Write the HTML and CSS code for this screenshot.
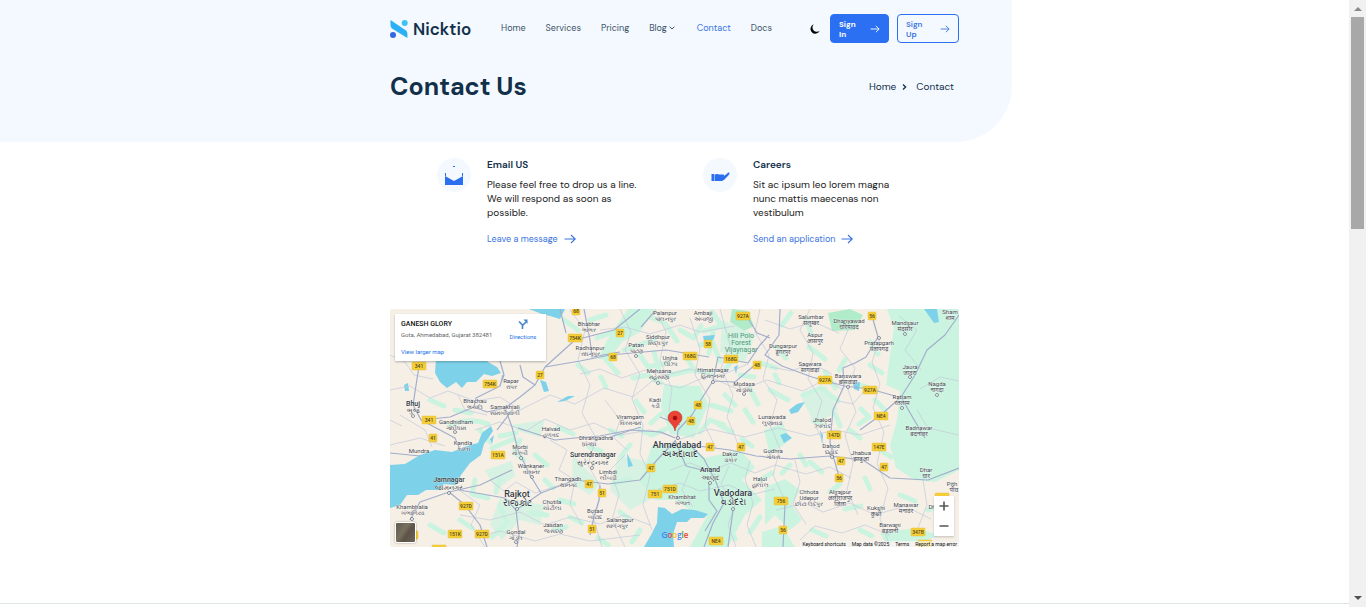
FILE: index.html
```html
<!DOCTYPE html>
<html lang="en">
<head>
<meta charset="utf-8">
<title>Contact Us - Nicktio</title>
<link rel="stylesheet" href="styles.css">
</head>
<body>
<svg class="defs" aria-hidden="true">
  <symbol id="arrow" viewBox="0 0 12 10"><path d="M0.5 5H11M7 1l4.2 4L7 9" fill="none" stroke="currentColor" stroke-width="1.1"/></symbol>
</svg>
<header class="hero">
  <div class="wrap">
    <nav class="nav">
      <a class="brand" href="#">
        <svg class="logo" viewBox="0 0 18 18"><path d="M.5 0 16 10.600Q18 12 17.300 18L2 8.500Q0 7 .5 0Z" fill="#2cb0f5"/><circle cx="14.700" cy="3" r="3" fill="#3fc3ee"/><circle cx="3" cy="15" r="3" fill="#3468df"/></svg>
        <span>Nicktio</span>
      </a>
      <ul class="menu">
        <li><a href="#">Home</a></li>
        <li><a href="#">Services</a></li>
        <li><a href="#">Pricing</a></li>
        <li><a href="#">Blog<svg class="chev" viewBox="0 0 6 4"><path d="M.6.7 3 3 5.400.7" fill="none" stroke="currentColor" stroke-width="1"/></svg></a></li>
        <li><a class="active" href="#">Contact</a></li>
        <li><a href="#">Docs</a></li>
      </ul>
      <div class="actions">
        <button class="theme" aria-label="Dark mode"><svg viewBox="0 0 10 10"><path d="M3.800.3A4.800 4.800 0 1 0 9.800 6.600 4 4 0 0 1 3.800.3Z"/></svg></button>
        <a class="btn solid" href="#"><span>Sign<br>In</span><svg><use href="#arrow"/></svg></a>
        <a class="btn outline" href="#"><span>Sign<br>Up</span><svg><use href="#arrow"/></svg></a>
      </div>
    </nav>
    <div class="title-row">
      <h1>Contact Us</h1>
      <div class="crumbs"><a href="#">Home</a><svg viewBox="0 0 5 6"><path d="M1 .6 3.600 3 1 5.400" fill="none" stroke="currentColor" stroke-width="1.300"/></svg><span>Contact</span></div>
    </div>
  </div>
</header>
<main class="wrap">
  <section class="features">
    <article class="feature">
      <div class="badge"><svg viewBox="0 0 34 34"><path d="M8 18 17 23 26 18V27H8Z" fill="#2a6ff0"/><path d="M8.500 18v-3M25.500 18v-3M16 8.500h2" stroke="#2a6ff0"/></svg></div>
      <div class="copy"><h2>Email US</h2><p>Please feel free to drop us a line. We will respond as soon as possible.</p><a class="more" href="#">Leave a message<svg><use href="#arrow"/></svg></a></div>
    </article>
    <article class="feature">
      <div class="badge"><svg viewBox="0 0 34 34"><path d="M8.500 16h2.500V23H8.500ZM11.500 16.500q3-.8 5 0h4q1.500 1 0 1.800l3.500-2.600q1-1.500 2.500-1 .5.800-1 2.500L21.500 21.500 19 23H11.500Z" fill="#2a6ff0"/></svg></div>
      <div class="copy"><h2>Careers</h2><p>Sit ac ipsum leo lorem magna nunc mattis maecenas non vestibulum</p><a class="more" href="#">Send an application<svg><use href="#arrow"/></svg></a></div>
    </article>
  </section>
  <section class="map" aria-label="Map">
    <svg class="canvas" viewBox="390 309 569 238" preserveAspectRatio="xMidYMid slice">
      <defs><rect id="s2" x="-4" y="-4" width="8" height="8" rx="1"/><rect id="s4" x="-7" y="-4" width="14" height="8" rx="1"/><circle id="dot" r="1.500"/></defs>
      <rect x="390" y="309" width="569" height="238" fill="#f5efe6"/>
      <g class="veg">
        <path d="M887 309 894 328 890 355 886 385 900 391 897 420 890 445 896 468 915 480 935 482 959 470V309Z"/>
        <path class="deep" d="M732 309 748 311 754 326 744 331 730 322ZM828 313 850 309 863 315 855 330 832 331Z"/>
        <path d="M652 445 690 444 705 458 740 450 755 467 742 480 762 500 745 515 728 547H690L708 514 690 510 675 500 655 500 640 482Z"/>
        <path d="M628 309 655 309 640 332 622 342 609 360 598 359 607 340ZM664 385 700 386 708 405 694 438 670 434 661 407Z"/>
        <path d="M765 487 785 479 800 490 792 505 802 520 790 530 775 515 765 525ZM764 430 783 423 790 440 770 455ZM880 533 915 528 940 535 925 541 885 542ZM762 532 782 526 795 547H762Z"/>
        <path d="M474 355 492 365 480 374ZM510 425 545 420 540 437 518 431ZM485 470 512 461 515 476 496 490ZM500 498 545 505 540 525 520 520 502 540 490 525ZM573 455 600 484 590 495 572 484ZM618 455 648 462 655 497 630 510 610 490ZM722 320 755 335 745 362 720 352ZM800 394 826 386 838 410 815 426Z" opacity=".7"/>
      </g>
      <g class="scrub">
        <path d="M450 425q20-8 38-1M500 436l16-3M492 448l22-9M475 480l-3 14 16 4M500 505l7 18-15 14M530 513l17 2M545 480l8 8M558 427l15 7M597 338l16-6M606 360l12 13M624 350l30-10M633 378l14-3 14 8M654 352l5 18M680 330l14 8 7-12M688 360l7 11 16 2M713 333l-4 20M726 338l12 8M738 353l-13 17M761 363l15 5M770 390l18 10M809 347l16 12M825 372l10 16M803 395l18-7 17 13M813 421l12 5M835 414l5 12M750 389l8 15M711 405l20 6M718 424l14 8M601 377l5 10M636 401l8 11M661 414l-10 9M589 447l12 4M613 484l16-5M620 512l8 6M570 517l12 6M598 538l10 7M554 530l12-3M727 519l8 20M750 532l10-15M760 480l12-7M776 347l10 11M782 325l9-12M806 318l5 16M870 342l8 12M860 385l12 4M861 409l8 8-10 7M810 462l12 10M830 492l10-8M845 509l16-3M865 478l5 11M900 495l15 6M928 510l14-5M880 450l11 7M742 439l10 7"/>
        <path d="M645 315l20 8 12 18M640 355l8 12 20-4M670 375l22-5M700 345l12-4 8 20M712 312l10 14-18 5M640 430l12 5 14-6M700 432l10-12 14 5M725 395l10 10M745 410l8 12M740 375l14 2M775 375l4 8M590 320l16-5M578 365l10 8M564 320l14 10M430 400l14 6M455 410l16 3M480 430l10 12M520 440l-6 12 10 8M535 455l12 10M500 480l-4 12M460 520l12 8M430 525l14 8M560 500l14 4M610 430l12 6M630 445l-8 10M640 530l-8 12M800 455l6 10M850 430l10 8M845 360l-6 10M875 400l10 10M870 365l12 8M860 530l12 6M812 530l14 6M790 465l-8 8"/>
      </g>
      <g class="water">
        <path d="M436 359 435 373 440 382 447 388 456 382 462 388 467 382 476 382 484 374 492 376 501 373 497 367 488 362 485 358ZM529 309h36l-5 10-10-3-8-2Z"/>
        <path d="M390 465 405 464 420 455 435 450 452 452 467 446 478 443 482 433 491 426 493 431 484 444 481 455 470 463 461 475 456 485 444 484 439 490 426 490 418 495 407 495 400 505 390 508Z"/>
        <path d="M658 507 665 508 672 514 682 509 695 510 708 514 704 518 691 518 687 522 677 522 673 534 674 547H644L651 535 657 523Z"/>
        <path d="M540 380 546 382 549 391 544 392ZM404 385 408 383 409 391 405 391ZM557 402 568 396 575 396 565 401ZM703 336 715 335 713 340 704 341ZM734 367 738 365 736 374ZM853 383 860 382 859 391 854 389ZM789 410 797 404 805 402 798 412 791 414ZM924 309h13l2 13-5 1-5-7ZM627 453 633 466 628 467ZM780 435 786 433 792 438 784 443ZM820 430 823 435 822 444ZM490 439l4-4-2 9Z"/>
      </g>
      <g class="paths">
        <path d="M390 390 410 386 430 398 448 391 475 401 500 397 520 410 550 395 575 404 604 388 633 397 652 381 680 388 707 376 740 390 767 380 803 391 826 379 843 390M390 445 420 438 445 446M475 430 500 422 526 431 545 419 570 430 594 423 620 435 650 430 681 439 710 429 745 437 778 428 810 436 835 430 860 435 890 425M400 415 425 430 432 447M570 310 585 330 578 360 590 385 582 413 596 438 588 465 602 490 594 520 602 547M620 309 631 332 625 350 640 374 632 399 643 425 640 454 650 475 643 505 652 530M655 309 666 332 660 360 672 389 669 410 680 430M690 318 700 349 695 375 710 399 705 426 716 448M720 309 730 345 721 368 733 395 727 417 738 444M760 309 755 332 769 355 763 379 777 400 770 425 780 449 773 475 785 500M810 309 800 330 813 353 808 379 822 401 815 424 825 447M850 325 840 349 855 368 848 390 856 412 845 435 853 463 847 490 858 515M880 337 872 362 880 384 873 408 884 432 877 464 888 488 880 519 890 547"/>
        <path d="M459 490 480 505 471 525 485 547M490 480 504 491 516 482 535 493 560 485M460 515 490 520 520 512 545 525 570 517 600 524 624 515 650 525M475 538 500 531 535 541 560 534 590 541 640 535M550 440 567 450 559 470 575 480 570 505 582 525M625 455 610 470 619 495 612 520 625 547M670 470 690 463 709 471 731 463 755 473 775 465 806 474 830 467 851 478M658 489 680 483 700 491 729 485 750 495 775 489M690 470 682 490 693 507M729 466 721 484 735 505 728 525 736 547M750 460 745 479 753 503 747 525 756 547M776 510 805 503 823 512 850 503 875 515 905 506 931 519M800 540 815 526 842 533 865 525 890 535M795 460 800 482 793 504 806 524M600 330 625 327 650 334 680 325 700 332 735 326M580 374 600 369 622 378 645 370 666 375 690 369 717 377 748 364M765 320 790 329 814 322 839 333M770 367 792 371 811 363 832 374M865 390 853 404 838 401M899 316 917 330 905 350 921 370M920 389 940 377 959 381M917 410 928 428 959 435M923 480 927 505 918 528M390 420 402 426M390 355 405 362 414 375 433 379M458 395 465 410 487 415M605 400 620 420 614 438 627 450"/>
      </g>
      <g class="roads">
        <path d="M419 366 413 405 421 420 450 417 474 407 487 412 505 408 520 397 535 385 545 367 575 340 614 330 640 309M421 420 440 430 455 438 460 450M474 407 476 398 500 386 503 375M545 367 580 361 610 355 666 350 709 357M500 361 504 375 500 385M520 365 523 377 535 385M505 408 512 427 518 450 530 475 541 493 516 510 519 535 517 547M390 453 420 456M513 409 497 430M512 470 480 485 449 492 420 502 410 520M449 492 465 505 480 525 487 547M516 510 505 498 459 490M541 493 575 480 608 484 640 480 657 460 675 441M518 428 555 440 575 438 600 436 630 430 661 432 675 438"/>
        <path d="M584 309 590 340 592 357 620 352M560 309 566 333M655 311 641 327M713 381 702 398 692 415 678 430 677 440M713 381 718 357 748 363 760 345 769 335M748 318 757 333 770 338M713 381 735 382 756 364M690 445 730 450 756 456 790 459 830 456 863 460 890 478 928 480 959 468M690 445 704 459 716 482 724 503 713 523 704 547M733 510 728 547M709 482 709 500 717 511 705 531M780 309 779 335 765 355 782 366 812 377 844 386 870 389 895 396M844 386 843 368 855 363 866 357 878 337 872 316M844 386 833 410 830 442 834 459 840 480M959 315 945 335 927 350 915 375 901 397 882 414 860 430M901 397 913 418 925 438M785 504 783 547M660 417 680 425M675 440 686 466 706 471M641 427 610 437M600 485 599 500 594 517 590 535"/>
      </g>
      <g class="dots"><use href="#dot" x="413" y="416"/><use href="#dot" x="449" y="493"/><use href="#dot" x="517" y="509"/><use href="#dot" x="678" y="438"/><use href="#dot" x="710" y="483"/><use href="#dot" x="733" y="509"/><use href="#dot" x="713" y="382"/><use href="#dot" x="592" y="468"/><use href="#dot" x="744" y="394"/><use href="#dot" x="658" y="383"/><use href="#dot" x="636" y="356"/><use href="#dot" x="879" y="338"/><use href="#dot" x="848" y="387"/><use href="#dot" x="902" y="408"/><use href="#dot" x="910" y="377"/><use href="#dot" x="937" y="395"/><use href="#dot" x="455" y="432"/><use href="#dot" x="521" y="458"/><use href="#dot" x="516" y="542"/><use href="#dot" x="532" y="477"/><use href="#dot" x="832" y="457"/><use href="#dot" x="412" y="519"/><use href="#dot" x="905" y="334"/></g>
      <g class="shield"><use href="#s2" x="576" y="311"/><use href="#s2" x="620" y="333"/><use href="#s2" x="613" y="357"/><use href="#s2" x="708" y="344"/><use href="#s2" x="757" y="365"/><use href="#s2" x="698" y="405"/><use href="#s2" x="691" y="421"/><use href="#s2" x="872" y="316"/><use href="#s2" x="540" y="375"/><use href="#s2" x="433" y="438"/><use href="#s2" x="710" y="447"/><use href="#s2" x="741" y="447"/><use href="#s2" x="651" y="468"/><use href="#s2" x="589" y="484"/><use href="#s2" x="602" y="493"/><use href="#s2" x="592" y="529"/><use href="#s2" x="841" y="461"/><use href="#s2" x="884" y="467"/><use href="#s2" x="839" y="478"/><use href="#s2" x="783" y="530"/><use href="#s4" x="419" y="366"/><use href="#s4" x="490" y="384"/><use href="#s4" x="575" y="338"/><use href="#s4" x="690" y="356"/><use href="#s4" x="731" y="359"/><use href="#s4" x="743" y="316"/><use href="#s4" x="825" y="380"/><use href="#s4" x="870" y="390"/><use href="#s4" x="881" y="416"/><use href="#s4" x="834" y="435"/><use href="#s4" x="879" y="447"/><use href="#s4" x="429" y="420"/><use href="#s4" x="498" y="455"/><use href="#s4" x="466" y="506"/><use href="#s4" x="455" y="534"/><use href="#s4" x="482" y="534"/><use href="#s4" x="411" y="535"/><use href="#s4" x="655" y="494"/><use href="#s4" x="670" y="489"/><use href="#s4" x="716" y="541"/><use href="#s4" x="781" y="501"/><use href="#s4" x="918" y="532"/><use href="#s4" x="942" y="497"/><use href="#s4" x="925" y="544"/><use href="#s4" x="439" y="549"/></g>
      <g class="num"><text x="576" y="313">68</text><text x="620" y="335">27</text><text x="613" y="359">68</text><text x="708" y="346">58</text><text x="757" y="367">48</text><text x="698" y="407">48</text><text x="691" y="423">48</text><text x="872" y="318">56</text><text x="540" y="377">27</text><text x="433" y="440">41</text><text x="710" y="449">47</text><text x="741" y="449">47</text><text x="651" y="470">47</text><text x="589" y="486">47</text><text x="602" y="495">51</text><text x="592" y="531">51</text><text x="841" y="463">47</text><text x="884" y="469">47</text><text x="839" y="480">56</text><text x="783" y="532">56</text><text x="419" y="368">341</text><text x="490" y="386">754K</text><text x="575" y="340">754K</text><text x="690" y="358">168G</text><text x="731" y="361">168G</text><text x="743" y="318">927A</text><text x="825" y="382">927A</text><text x="870" y="392">927A</text><text x="881" y="418">NE4</text><text x="834" y="437">147D</text><text x="879" y="449">147E</text><text x="429" y="422">341</text><text x="498" y="457">151A</text><text x="466" y="508">927D</text><text x="455" y="536">151K</text><text x="482" y="536">927D</text><text x="655" y="496">751</text><text x="670" y="491">751D</text><text x="716" y="543">NE4</text><text x="781" y="503">756</text><text x="918" y="534">347B</text></g>
      <g class="town">
        <text x="511" y="383">Rapar</text><text x="511" y="389">રાપર</text>
        <text x="475" y="403">Bhachau</text><text x="475" y="409">ભચાઉ</text>
        <text x="505" y="409">Samakhiali</text><text x="505" y="415">સામખીયાળી</text>
        <text x="456" y="424">Gandhidham</text><text x="456" y="430">ગાંધીધામ</text>
        <text x="463" y="445">Kandla</text><text x="463" y="451">કંડલા</text>
        <text x="419" y="453">Mundra</text>
        <text x="551" y="431">Halvad</text><text x="551" y="437">હળવદ</text>
        <text x="520" y="449">Morbi</text><text x="520" y="455">મોરબી</text>
        <text x="531" y="468">Wankaner</text><text x="531" y="474">વાંકાનેર</text>
        <text x="568" y="481">Thangadh</text><text x="568" y="487">થાનગઢ</text>
        <text x="552" y="504">Chotila</text><text x="552" y="510">ચોટીલા</text>
        <text x="553" y="527">Jasdan</text><text x="553" y="533">જસદણ</text>
        <text x="516" y="534">Gondal</text><text x="516" y="540">ગોંડલ</text>
        <text x="412" y="509">Khambhalia</text><text x="412" y="515">ખંભાળિયા</text>
        <text x="589" y="326">Bhabhar</text><text x="589" y="332">ભાભર</text>
        <text x="590" y="350">Radhanpur</text><text x="590" y="356">રાધનપુર</text>
        <text x="665" y="315">Palanpur</text><text x="665" y="321">પાલનપુર</text>
        <text x="703" y="315">Ambaji</text><text x="703" y="321">અંબાજી</text>
        <text x="658" y="339">Siddhpur</text><text x="658" y="345">સિદ્ધપુર</text>
        <text x="636" y="347">Patan</text><text x="636" y="353">પાટણ</text>
        <text x="670" y="360">Unjha</text><text x="670" y="366">ઊંઝા</text>
        <text x="659" y="373">Mehsana</text><text x="659" y="379">મહેસાણા</text>
        <text x="713" y="372">Himatnagar</text><text x="713" y="378">હિંમતનગર</text>
        <text x="744" y="386">Modasa</text><text x="744" y="392">મોડાસા</text>
        <text x="655" y="402">Kadi</text><text x="655" y="408">કડી</text>
        <text x="630" y="419">Viramgam</text><text x="630" y="425">વિરમગામ</text>
        <text x="596" y="440">Dhrangadhra</text><text x="589" y="446">ધ્રાંગધ્રા</text>
        <text x="608" y="474">Limbdi</text><text x="608" y="480">લીંબડી</text>
        <text x="595" y="513">Botad</text><text x="595" y="519">બોટાદ</text>
        <text x="620" y="522">Salangpur</text><text x="617" y="528">સાળંગપુર</text>
        <text x="682" y="499">Khambhat</text><text x="682" y="505">ખંભાત</text>
        <text x="730" y="456">Dakor</text><text x="730" y="462">ડાકોર</text>
        <text x="773" y="453">Godhra</text><text x="773" y="459">ગોધરા</text>
        <text x="760" y="481">Halol</text><text x="760" y="487">હાલોલ</text>
        <text x="772" y="419">Lunawada</text><text x="772" y="425">લુણાવાડા</text>
        <text x="811" y="319">Salumbar</text><text x="811" y="325">सलूम्बर</text>
        <text x="849" y="323">Dhariyawad</text><text x="849" y="329">धरियावद</text>
        <text x="815" y="337">Aspur</text><text x="815" y="343">आसपुर</text>
        <text x="783" y="348">Dungarpur</text><text x="783" y="354">डूंगरपुर</text>
        <text x="810" y="366">Sagwara</text><text x="810" y="372">सागवाड़ा</text>
        <text x="879" y="345">Pratapgarh</text><text x="879" y="351">प्रतापगढ़</text>
        <text x="905" y="325">Mandsaur</text><text x="905" y="331">मंदसौर</text>
        <text x="950" y="314">Sham</text><text x="950" y="320">शाम</text>
        <text x="848" y="378">Banswara</text><text x="848" y="384">बांसवाड़ा</text>
        <text x="910" y="369">Jaora</text><text x="910" y="375">जावरा</text>
        <text x="937" y="386">Nagda</text><text x="937" y="392">नागदा</text>
        <text x="902" y="399">Ratlam</text><text x="902" y="405">रतलाम</text>
        <text x="822" y="422">Jhalod</text><text x="822" y="428">ઝાલોદ</text>
        <text x="831" y="448">Dahod</text><text x="831" y="454">દાહોદ</text>
        <text x="861" y="455">Jhabua</text><text x="861" y="461">झाबुआ</text>
        <text x="919" y="430">Badnawar</text><text x="919" y="436">बदनावर</text>
        <text x="926" y="472">Dhar</text><text x="926" y="478">धार</text>
        <text x="809" y="494">Chhota</text><text x="809" y="500">Udepur</text><text x="809" y="506">છોટા ઉદેપુર</text>
        <text x="840" y="494">Alirajpur</text><text x="840" y="500">अलीराजपुर</text><text x="840" y="506">जिला</text>
        <text x="876" y="510">Kukshi</text><text x="876" y="516">कुक्षी</text>
        <text x="906" y="507">Manawar</text><text x="906" y="513">मनावर</text>
        <text x="890" y="527">Barwani</text><text x="890" y="533">बड़वानी</text>
        <text x="952" y="486">Pith</text><text x="954" y="492">पीथ</text><text x="932" y="509">Dh</text>
      </g>
      <g class="forest"><text x="741" y="338">Hill Polo</text><text x="741" y="345">Forest</text><text x="741" y="352">Vijaynagar</text></g>
      <g class="city"><text x="413" y="406">Bhuj</text><text x="413" y="413">ભુજ</text><text x="449" y="482">Jamnagar</text><text x="449" y="490">જામનગર</text><text x="593" y="457">Surendranagar</text><text x="593" y="465">સુરેન્દ્રનગર</text><text x="710" y="472">Anand</text><text x="710" y="480">આણંદ</text></g>
      <g class="metro"><text x="517" y="497">Rajkot</text><text x="517" y="506">રાજકોટ</text><text x="677" y="448">Ahmedabad</text><text x="680" y="457">અમદાવાદ</text><text x="733" y="496">Vadodara</text><text x="733" y="505">વડોદરા</text></g>
      <path d="M675 431C674 424 668 423 668 417.500A7 6.500 0 0 1 682 417.500C682 423 676 424 675 431Z" fill="#ea4335" stroke="#c5221f" stroke-width=".5"/><circle cx="675" cy="418" r="2.300" fill="#a50e0e"/>
      <text class="google" x="675" y="538"><tspan fill="#4285f4">G</tspan><tspan fill="#ea4335">o</tspan><tspan fill="#fbbc04">o</tspan><tspan fill="#4285f4">g</tspan><tspan fill="#34a853">l</tspan><tspan fill="#ea4335">e</tspan></text>
    </svg>
    <div class="place">
      <div><strong>GANESH GLORY</strong><p>Gota, Ahmedabad, Gujarat 382481</p><a href="#">View larger map</a></div>
      <a class="directions" href="#"><svg viewBox="0 0 10 10"><path d="M4.500 10V6L1 2.500M4.500 6.500 8 3" fill="none" stroke="#4285c8" stroke-width="1.600"/><path d="M5.500.5H9.500V5Z" fill="#4285c8"/></svg>Directions</a>
    </div>
    <button class="satellite" aria-label="Satellite view"></button>
    <div class="zoom"><button aria-label="Zoom in"><svg viewBox="0 0 10 10"><path d="M5 .5v9M.5 5h9" stroke="#555" stroke-width="1.600"/></svg></button><button aria-label="Zoom out"><svg viewBox="0 0 10 10"><path d="M.5 5h9" stroke="#555" stroke-width="1.600"/></svg></button></div>
    <div class="credits"><span>Keyboard shortcuts</span><span>Map data ©2025</span><span>Terms</span><span>Report a map error</span></div>
  </section>
</main>
<footer class="footer"></footer>
<div class="scrollbar" aria-hidden="true"><i class="up"></i><i class="thumb"></i><i class="down"></i></div>
</body>
</html>
```
FILE: styles.css
```css
* { box-sizing: border-box; }
body { margin: 0; padding-right: 17px; min-height: 100vh; display: flex; flex-direction: column; background: #fff; color: #12263d; font: 10px/14px "DM Sans", Inter, sans-serif; overflow: hidden; }
a { color: inherit; text-decoration: none; }
button { border: 0; padding: 0; background: none; }
h1, h2, p, ul { margin: 0; padding: 0; }
.defs { position: absolute; width: 0; height: 0; }
.wrap { width: 100%; max-width: 569px; margin: 0 auto; }
.hero { position: relative; padding: 14px 0 38px; }
.hero::before { content: ""; position: absolute; z-index: -1; inset: 0 25% 0 0; background: #f3f9fe; border-bottom-right-radius: 56px; }
.nav { display: flex; align-items: center; height: 29px; }
.brand { display: flex; align-items: center; gap: 5px; width: 111px; font: 600 17px/20px "DM Sans", Inter, sans-serif; color: #12304a; }
.logo { width: 18px; height: 18px; }
.menu { display: flex; gap: 20px; padding-bottom: 2px; list-style: none; font-size: 9px; color: #41546a; }
.chev { width: 6px; height: 4px; margin: 0 2px; vertical-align: middle; }
.active { color: #3b74e0; }
.actions { display: flex; align-items: center; gap: 8px; margin-left: auto; }
.theme { width: 10px; height: 10px; display: flex; margin-right: 2px; }
.theme svg { width: 10px; height: 10px; }
.btn { display: flex; align-items: center; justify-content: space-between; width: 59px; height: 29px; padding: 0 8px; border: 1px solid #2b70f3; border-radius: 4px; font-weight: 700; font-size: 8px; line-height: 10px; }
.btn svg { width: 10px; height: 8px; }
.solid { background: #2b70f3; color: #fff; }
.outline { width: 62px; color: #3b74e0; font-weight: 600; }
.title-row { display: flex; align-items: center; justify-content: space-between; height: 34px; margin-top: 27px; }
h1 { font: 700 25px/34px "DM Sans", Inter, sans-serif; color: #12304a; }
.crumbs { display: flex; align-items: center; padding-right: 5px; color: #12304a; }
.crumbs svg { width: 5px; height: 6px; margin: 0 9px 0 6px; }
.features { display: flex; gap: 48px; padding: 16px 0 0 47px; }
.feature { display: flex; gap: 16px; width: 218px; }
.badge { flex: none; width: 34px; height: 34px; border-radius: 50%; background: #f3f9fe; }
.copy { flex: 1; max-width: 155px; }
h2 { font-size: 10px; line-height: 14px; font-weight: 600; color: #12304a; }
.copy p { margin: 6px 0 12px; color: #222; }
.more { display: flex; align-items: center; gap: 6px; font-size: 9px; color: #3b74e0; white-space: nowrap; }
.more svg { width: 12px; height: 10px; }
.map { position: relative; display: flex; margin-top: 63px; overflow: hidden; border-radius: 2px; font-family: Roboto, sans-serif; }
.canvas { width: 100%; display: block; aspect-ratio: 569 / 238; }
.veg { fill: #cbf4e0; }
.deep { fill: #b0ecc9; }
.scrub { fill: none; stroke: #cbf4e0; stroke-width: 5; stroke-linecap: round; stroke-linejoin: round; }
.water { fill: #7dd1e8; }
.paths { fill: none; stroke: #c3cadb; stroke-width: 0.7; }
.roads { fill: none; stroke: #a2aecb; stroke-width: 1.2; stroke-linejoin: round; }
.dots { fill: #fff; stroke: #5a6270; stroke-width: 0.7; }
.shield { fill: #f5cf3b; stroke: #dfb620; stroke-width: 0.4; }
.canvas text { text-anchor: middle; font-family: Roboto, "Noto Sans", sans-serif; }
.num text { font-size: 5px; font-weight: 500; fill: #514617; }
.town text { font-size: 6px; fill: #3f444c; }
.forest text { font-size: 7px; fill: #4b987b; }
.city text { font-size: 7px; font-weight: 500; fill: #333940; }
.metro text { font-size: 9px; font-weight: 500; fill: #33383f; }
.town, .city, .metro { paint-order: stroke; stroke: #fff; stroke-width: 0.4; }
.canvas .google { font: 600 8px "Open Sans", sans-serif; }
.place { position: absolute; left: 5px; top: 5px; width: 151px; height: 47px; padding: 5px 6px; display: flex; justify-content: space-between; background: #fff; box-shadow: 0 1px 2px #0004; font-size: 6px; line-height: 8px; color: #1a73e8; }
.place strong { display: block; font-size: 7px; font-weight: 500; line-height: 10px; color: #111; white-space: nowrap; }
.place p { margin: 2px 0 9px; color: #666; white-space: nowrap; }
.directions { display: flex; flex-direction: column; align-items: center; gap: 4px; width: 34px; }
.directions svg { width: 10px; height: 10px; }
.satellite { position: absolute; left: 5px; bottom: 4px; width: 21px; height: 21px; border: 1px solid #fff; border-radius: 2px; background: linear-gradient(125deg, #5d5a4e, #77705f 40%, #5c5248 60%, #6d6558); box-shadow: 0 0 2px #0006; }
.zoom { position: absolute; right: 5px; bottom: 11px; width: 20px; background: #fff; box-shadow: 0 1px 2px #0003; }
.zoom button { width: 20px; height: 20px; display: grid; place-items: center; }
.zoom svg { width: 10px; height: 10px; }
.credits { position: absolute; right: 0; bottom: 0; display: flex; gap: 6px; padding: 0 2px; font-size: 5px; line-height: 6px; color: #111; background: #f5f5f5b0; }
.footer { margin-top: auto; height: 4px; border-top: 1px solid #dfe5e5; }
.scrollbar { position: fixed; top: 0; right: 0; bottom: 0; width: 17px; background: #f1f1f1; display: flex; flex-direction: column; align-items: center; padding: 7px 0; }
.up { border: 4px solid transparent; border-top: 0; border-bottom: 4px solid #8a8a8a; }
.thumb { width: 13px; height: 35vh; margin-top: 6px; background: #a8a8a8; }
.down { margin-top: auto; border: 4px solid transparent; border-bottom: 0; border-top: 4px solid #505050; }
```
